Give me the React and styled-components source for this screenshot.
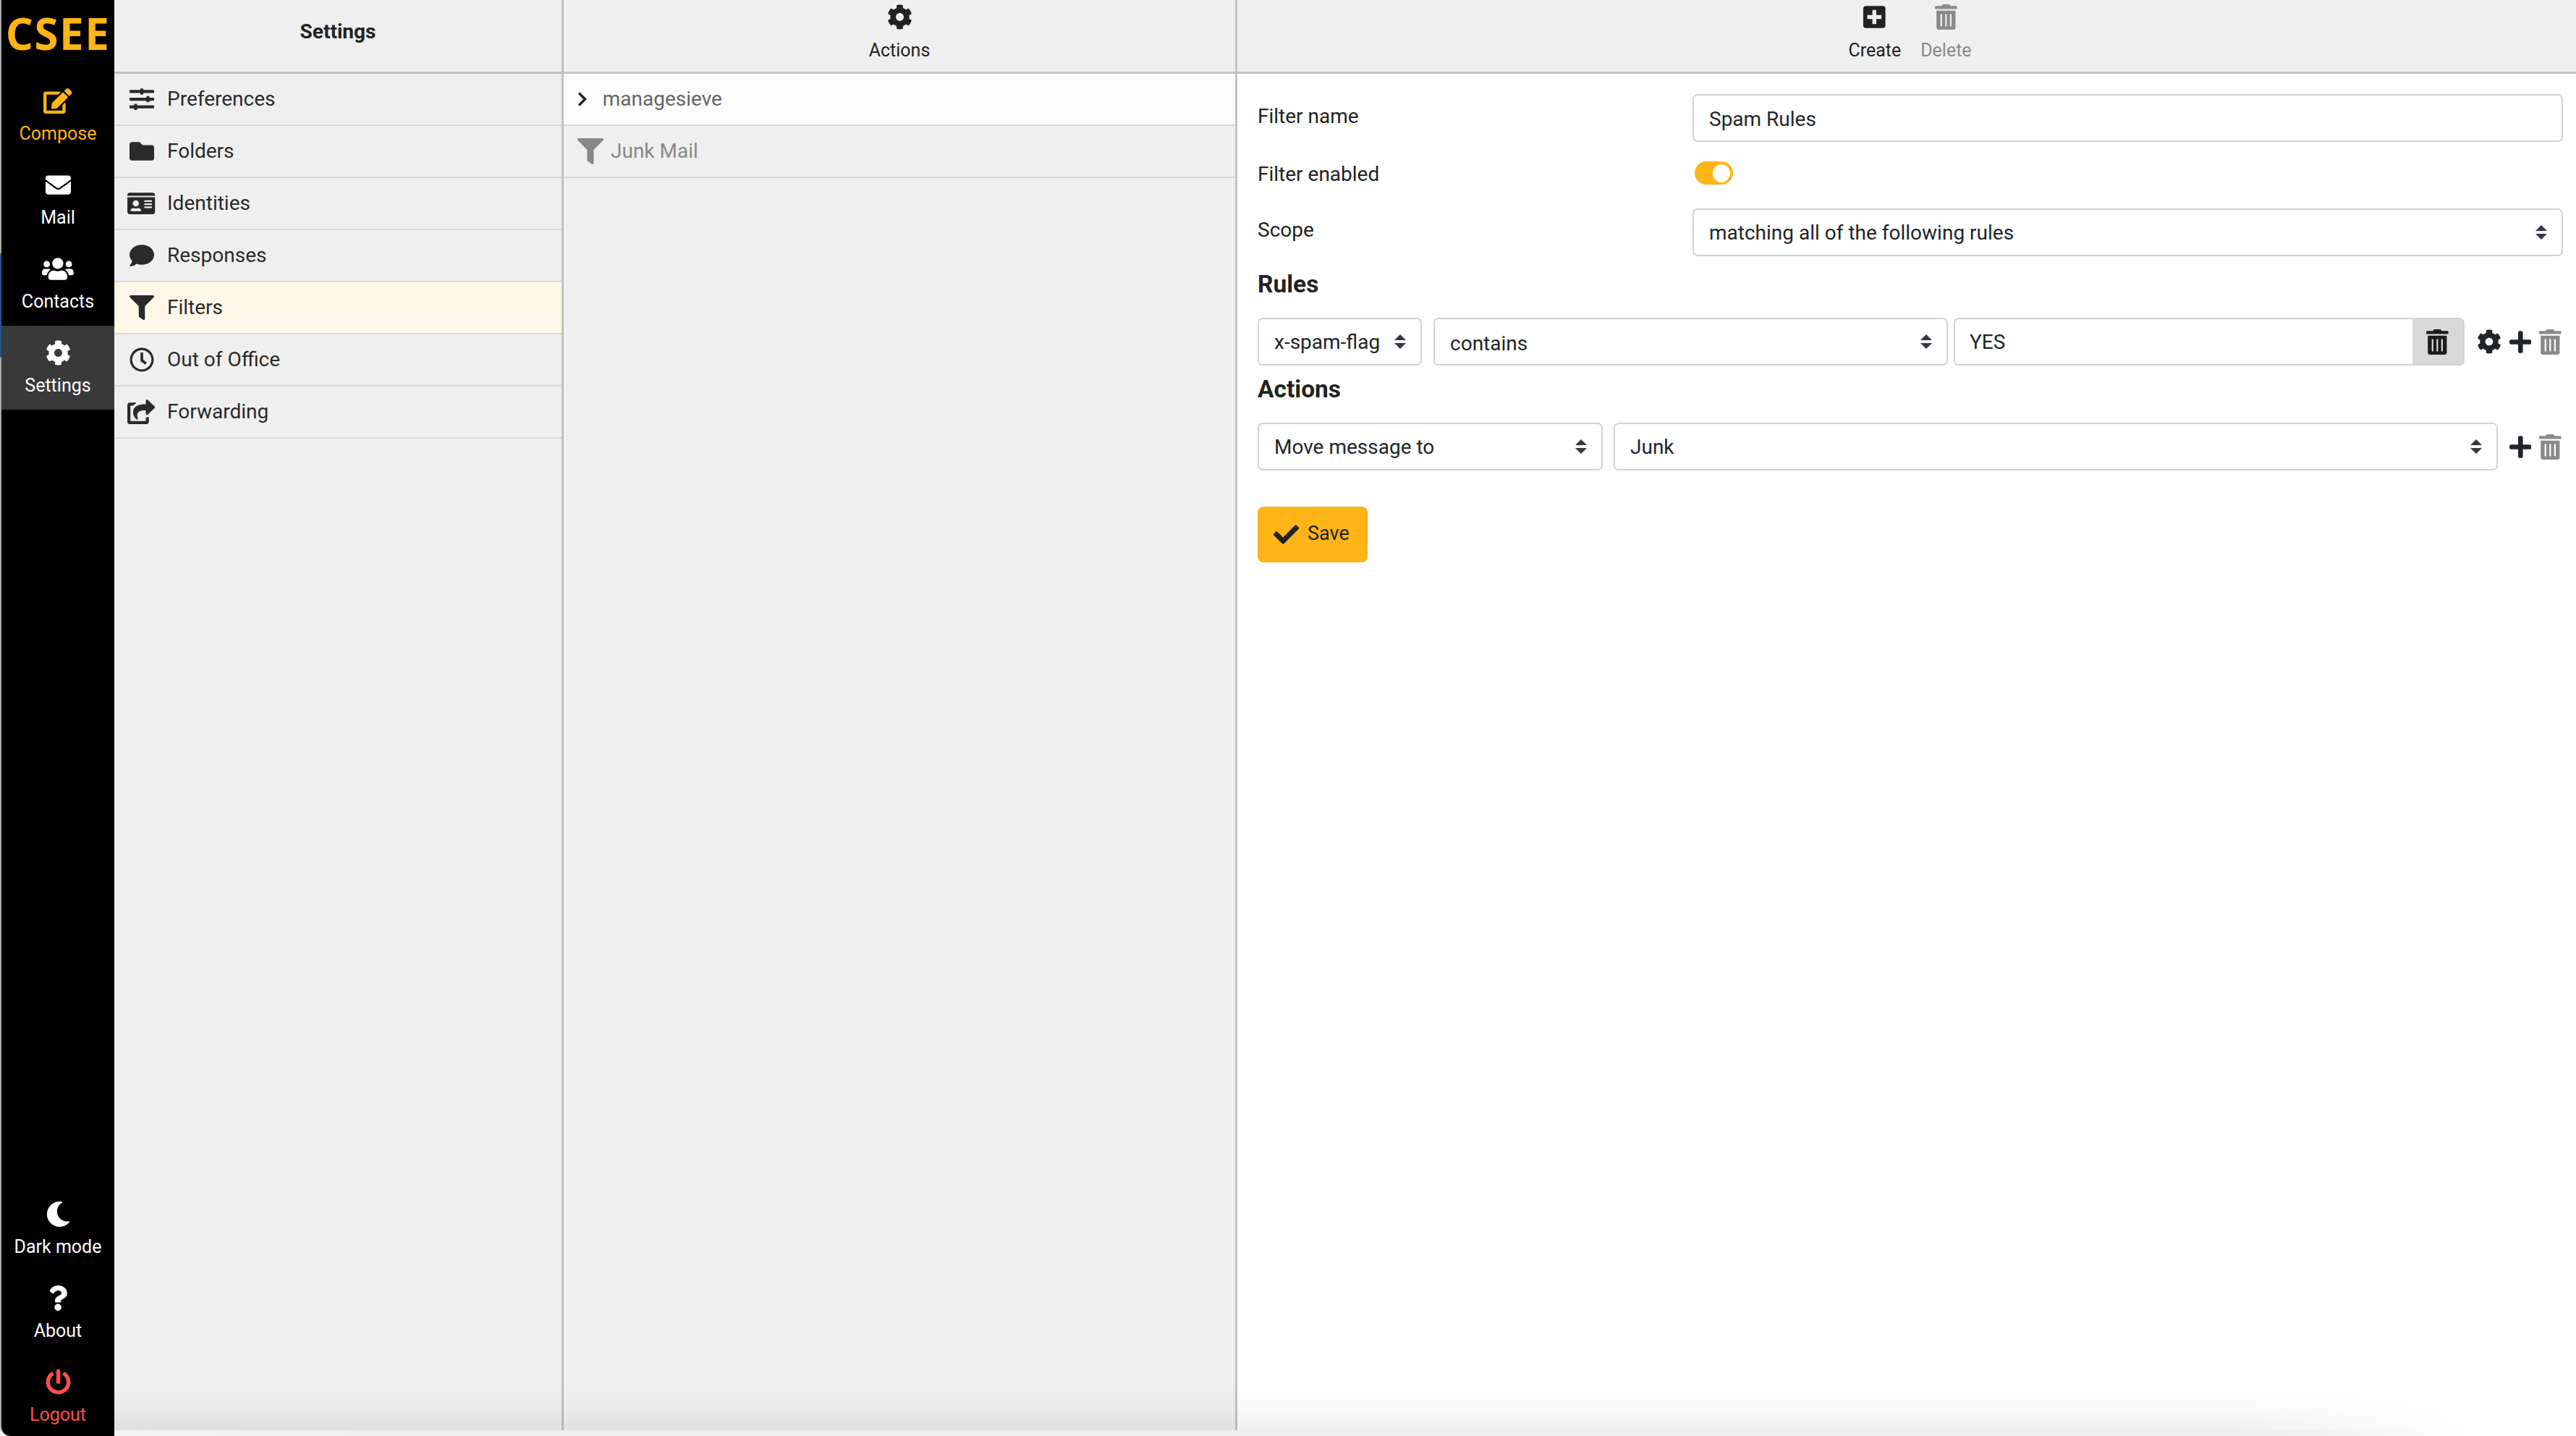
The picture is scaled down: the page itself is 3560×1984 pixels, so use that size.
import React from "react";
import styled, { createGlobalStyle } from "styled-components";
import {
  FaCheck,
  FaChevronRight,
  FaCog,
  FaComment,
  FaEdit,
  FaEnvelope,
  FaFilter,
  FaFolder,
  FaIdCard,
  FaMoon,
  FaPlus,
  FaPlusSquare,
  FaPowerOff,
  FaQuestion,
  FaRegClock,
  FaShareSquare,
  FaSlidersH,
  FaTrashAlt,
  FaUsers,
} from "react-icons/fa";

const GlobalStyle = createGlobalStyle`
  html, body {
    margin: 0;
    height: 100%;
    overflow: hidden;
    background: #fff;
  }
  #root {
    height: 100%;
  }
  * {
    box-sizing: border-box;
  }
`;

const Page = styled.div`
  position: relative;
  display: flex;
  height: 100vh;
  font-family: Roboto, "Liberation Sans", sans-serif;
  font-size: 28px;
  color: #222;
  background: #f4f4f4;
`;

const Sidebar = styled.nav`
  flex: 0 0 158px;
  display: flex;
  flex-direction: column;
  overflow: hidden;
  background: #000;
  border-left: 2px solid #a8a8a8;
  border-bottom-left-radius: 14px;
`;

const BehindSliver = styled.div`
  position: absolute;
  left: 0;
  top: 350px;
  width: 2px;
  height: 144px;
  background: #1c5a8f;
`;

const Logo = styled.div`
  height: 102px;
  padding-top: 12px;
  font-family: "Open Sans", sans-serif;
  font-weight: 700;
  font-size: 60px;
  line-height: 68px;
  letter-spacing: 1.5px;
  text-align: center;
  color: #ffb417;
`;

const NavItem = styled.a`
  flex: 0 0 116px;
  display: flex;
  flex-direction: column;
  align-items: center;
  padding-top: 20px;
  color: ${(p) => p.$color || "#fff"};
  background: ${(p) => (p.$active ? "#393939" : "transparent")};
`;

const NavBottom = styled.div`
  margin-top: auto;
  margin-bottom: -4px;
  display: flex;
  flex-direction: column;
`;

const NavLabel = styled.span`
  margin-top: 13px;
  font-size: 25px;
  line-height: 30px;
  white-space: nowrap;
`;

const Glyph = styled.span`
  display: flex;
  justify-content: center;
  align-items: center;
  flex: none;
  height: ${(p) => p.$size}px;
  width: ${(p) => (p.$box ? `${p.$box}px` : "auto")};
  color: ${(p) => p.$color || "inherit"};

  svg {
    display: block;
    height: ${(p) => p.$size}px;
    width: ${(p) => p.$size * p.$ratio}px;
  }
`;

const Main = styled.div`
  position: relative;
  flex: 1;
  min-width: 0;
  display: flex;
  flex-direction: column;
`;

const Columns = styled.div`
  flex: 1;
  min-height: 0;
  display: flex;
`;

const BottomStrip = styled.div`
  flex: 0 0 8px;
  background: linear-gradient(to right, #f5f5f5, #efefef 10%, #efefef 88%, #fff 96%);
`;

const BottomShade = styled.div`
  position: absolute;
  left: 0;
  right: 0;
  bottom: 8px;
  height: 64px;
  pointer-events: none;
  background: linear-gradient(to bottom, rgba(0, 0, 0, 0), rgba(0, 0, 0, 0.02) 50%, rgba(0, 0, 0, 0.06));
  mask-image: linear-gradient(to right, #000 86%, transparent 96%);
`;

const Column = styled.section`
  flex: ${(p) => (p.$width ? `0 0 ${p.$width}px` : "1")};
  min-width: 0;
  display: flex;
  flex-direction: column;
  background: ${(p) => p.$bg || "#efefef"};
  border-right: ${(p) => (p.$divider ? "3px solid #c2c2c2" : "none")};
`;

const Header = styled.header`
  flex: 0 0 102px;
  display: flex;
  justify-content: center;
  gap: 27px;
  padding-left: ${(p) => p.$shift || 0}px;
  background: #efefef;
  border-bottom: 3px solid #c4c4c4;
`;

const HeaderTitle = styled.h1`
  margin: 0;
  align-self: center;
  padding-bottom: 12px;
  font-size: 28px;
  line-height: 36px;
  font-weight: 700;
  color: #222;
`;

const ToolButton = styled.a`
  display: flex;
  flex-direction: column;
  align-items: center;
  padding-top: 6px;
  color: ${(p) => (p.$disabled ? "#8a8a8a" : "#222")};
`;

const ToolLabel = styled.span`
  margin-top: 14px;
  font-size: 25px;
  line-height: 30px;
`;

const MenuRow = styled.a`
  flex: 0 0 72px;
  display: flex;
  align-items: center;
  gap: 16px;
  padding: 0 0 1px 18px;
  background: ${(p) => (p.$active ? "#fff8e9" : "transparent")};
  border-bottom: 2px solid #d8d8d8;
  color: #2a2a2a;
`;

const SieveRow = styled.a`
  flex: 0 0 72px;
  display: flex;
  align-items: center;
  gap: ${(p) => p.$gap}px;
  padding: 0 0 1px 19px;
  background: ${(p) => (p.$light ? "#fbfbfb" : "transparent")};
  border-bottom: 2px solid #d8d8d8;
  color: ${(p) => p.$color};
`;

const Form = styled.form`
  padding: 28px 18px 0 28px;
`;

const FormGrid = styled.div`
  display: grid;
  grid-template-columns: 601px 1fr;
  row-gap: 14px;
`;

const FieldLabel = styled.label`
  padding-top: ${(p) => p.$top}px;
  line-height: 36px;
`;

const TextField = styled.div`
  display: flex;
  align-items: center;
  height: 66px;
  padding: 0 21px;
  background: #fff;
  border: 2px solid #ced4da;
  border-radius: 7px;
  color: #212529;
  white-space: nowrap;
`;

const SelectBox = styled(TextField)`
  flex: ${(p) => (p.$width ? `0 0 ${p.$width}px` : "1")};
  justify-content: space-between;
  gap: 12px;
  padding-right: 20px;
`;

const ValueText = styled.span`
  position: relative;
  top: ${(p) => p.$nudge || 0}px;
`;

const ToggleCell = styled.div`
  height: 64px;
  padding: 13px 0 0 3px;
`;

const Toggle = styled.span`
  display: flex;
  align-items: center;
  justify-content: flex-end;
  width: 53px;
  height: 32px;
  padding-right: 4px;
  border-radius: 16px;
  background: #ffb417;
`;

const ToggleKnob = styled.span`
  width: 24px;
  height: 25px;
  border-radius: 50%;
  background: #fff;
`;

const SectionTitle = styled.h2`
  margin: ${(p) => p.$top}px 0 ${(p) => p.$bottom}px;
  font-size: 33.5px;
  line-height: 40px;
  font-weight: 700;
  color: #222;
`;

const FieldRow = styled.div`
  display: flex;
  align-items: center;
  gap: ${(p) => p.$gap || 0}px;
`;

const InputGroup = styled.div`
  flex: 1;
  min-width: 0;
  display: flex;
  align-items: stretch;
  height: 66px;
  margin-left: -8px;
  background: #fff;
  border: 2px solid #ced4da;
  border-radius: 7px;
  overflow: hidden;
`;

const GroupInput = styled.div`
  flex: 1;
  display: flex;
  align-items: center;
  padding-left: 20px;
  color: #212529;
`;

const GroupAddon = styled.div`
  flex: 0 0 70px;
  display: flex;
  align-items: center;
  justify-content: center;
  background: #d8d8d8;
  color: #1c1c1c;
`;

const RowTools = styled.div`
  flex: none;
  display: flex;
  align-items: center;
  gap: 11px;
  margin-left: 1px;
  margin-right: 2px;
  color: #212529;
`;

const SaveButton = styled.button`
  display: flex;
  align-items: center;
  gap: 12px;
  width: 152px;
  height: 77px;
  margin-top: 50px;
  padding: 0 0 0 22px;
  border: 0;
  border-radius: 8px;
  background: #ffb417;
  color: #222;
  font-family: inherit;
  font-size: 27px;
`;

const SaveText = styled.span`
  position: relative;
  top: -2px;
`;

const Caret = () => (
  <svg width="16" height="20" viewBox="0 0 4 5" style={{ flex: "none" }}>
    <path fill="#343a40" d="M2 0L0 2h4zm0 5L0 3h4z" />
  </svg>
);

// width / height of the icons whose viewBox is not square
const ratios = new Map([
  [FaEdit, 1.125],
  [FaUsers, 1.25],
  [FaIdCard, 1.125],
  [FaShareSquare, 1.125],
  [FaPlus, 0.875],
  [FaPlusSquare, 0.875],
  [FaTrashAlt, 0.875],
  [FaQuestion, 0.75],
  [FaChevronRight, 0.625],
]);

const Icon = ({ of: Svg, size = 35, box, color }) => (
  <Glyph $size={size} $ratio={ratios.get(Svg) || 1} $box={box} $color={color}>
    <Svg />
  </Glyph>
);

const menu = [
  ["Preferences", FaSlidersH],
  ["Folders", FaFolder],
  ["Identities", FaIdCard],
  ["Responses", FaComment],
  ["Filters", FaFilter, true],
  ["Out of Office", FaRegClock],
  ["Forwarding", FaShareSquare],
];

const topNav = [
  ["Compose", FaEdit, "#ffb417"],
  ["Mail", FaEnvelope],
  ["Contacts", FaUsers],
  ["Settings", FaCog, null, true],
];

const bottomNav = [
  ["Dark mode", FaMoon],
  ["About", FaQuestion],
  ["Logout", FaPowerOff, "#ff4d4d"],
];

const NavEntry = ({ label, svg, color, active }) => (
  <NavItem $color={color} $active={active}>
    <Icon of={svg} />
    <NavLabel>{label}</NavLabel>
  </NavItem>
);

export default function App() {
  return (
    <Page>
      <GlobalStyle />
      <Sidebar>
        <Logo>CSEE</Logo>
        {topNav.map(([label, svg, color, active]) => (
          <NavEntry key={label} label={label} svg={svg} color={color} active={active} />
        ))}
        <NavBottom>
          {bottomNav.map(([label, svg, color]) => (
            <NavEntry key={label} label={label} svg={svg} color={color} />
          ))}
        </NavBottom>
      </Sidebar>
      <BehindSliver />
      <Main>
        <Columns>
          <Column $width={621} $divider>
            <Header>
              <HeaderTitle>Settings</HeaderTitle>
            </Header>
            {menu.map(([label, svg, active]) => (
              <MenuRow key={label} $active={active}>
                <Icon of={svg} size={34} box={39} />
                {label}
              </MenuRow>
            ))}
          </Column>
          <Column $width={931} $divider>
            <Header>
              <ToolButton>
                <Icon of={FaCog} />
                <ToolLabel>Actions</ToolLabel>
              </ToolButton>
            </Header>
            <SieveRow $light $gap={21} $color="#666">
              <Icon of={FaChevronRight} size={22} color="#222" />
              managesieve
            </SieveRow>
            <SieveRow $gap={10} $color="#888">
              <Icon of={FaFilter} size={36} />
              Junk Mail
            </SieveRow>
          </Column>
          <Column $bg="#fff">
            <Header $shift={9}>
              <ToolButton>
                <Icon of={FaPlusSquare} />
                <ToolLabel>Create</ToolLabel>
              </ToolButton>
              <ToolButton $disabled>
                <Icon of={FaTrashAlt} />
                <ToolLabel>Delete</ToolLabel>
              </ToolButton>
            </Header>
            <Form>
              <FormGrid>
                <FieldLabel $top={13}>Filter name</FieldLabel>
                <TextField>
                  <ValueText $nudge={1}>Spam Rules</ValueText>
                </TextField>
                <FieldLabel $top={13}>Filter enabled</FieldLabel>
                <ToggleCell>
                  <Toggle>
                    <ToggleKnob />
                  </Toggle>
                </ToggleCell>
                <FieldLabel $top={12}>Scope</FieldLabel>
                <SelectBox>
                  matching all of the following rules
                  <Caret />
                </SelectBox>
              </FormGrid>

              <SectionTitle $top={19} $bottom={26}>
                Rules
              </SectionTitle>
              <FieldRow $gap={16}>
                <SelectBox $width={227}>
                  x-spam-flag
                  <Caret />
                </SelectBox>
                <SelectBox $width={711}>
                  <ValueText $nudge={2}>contains</ValueText>
                  <Caret />
                </SelectBox>
                <InputGroup>
                  <GroupInput>YES</GroupInput>
                  <GroupAddon>
                    <Icon of={FaTrashAlt} />
                  </GroupAddon>
                </InputGroup>
                <RowTools>
                  <Icon of={FaCog} size={34} />
                  <Icon of={FaPlus} />
                  <Icon of={FaTrashAlt} color="#8a8a8a" />
                </RowTools>
              </FieldRow>

              <SectionTitle $top={13} $bottom={26}>
                Actions
              </SectionTitle>
              <FieldRow $gap={15}>
                <SelectBox $width={477}>
                  Move message to
                  <Caret />
                </SelectBox>
                <SelectBox>
                  Junk
                  <Caret />
                </SelectBox>
                <RowTools>
                  <Icon of={FaPlus} />
                  <Icon of={FaTrashAlt} color="#8a8a8a" />
                </RowTools>
              </FieldRow>
              <SaveButton type="button">
                <Icon of={FaCheck} />
                <SaveText>Save</SaveText>
              </SaveButton>
            </Form>
          </Column>
        </Columns>
        <BottomStrip />
        <BottomShade />
      </Main>
    </Page>
  );
}
